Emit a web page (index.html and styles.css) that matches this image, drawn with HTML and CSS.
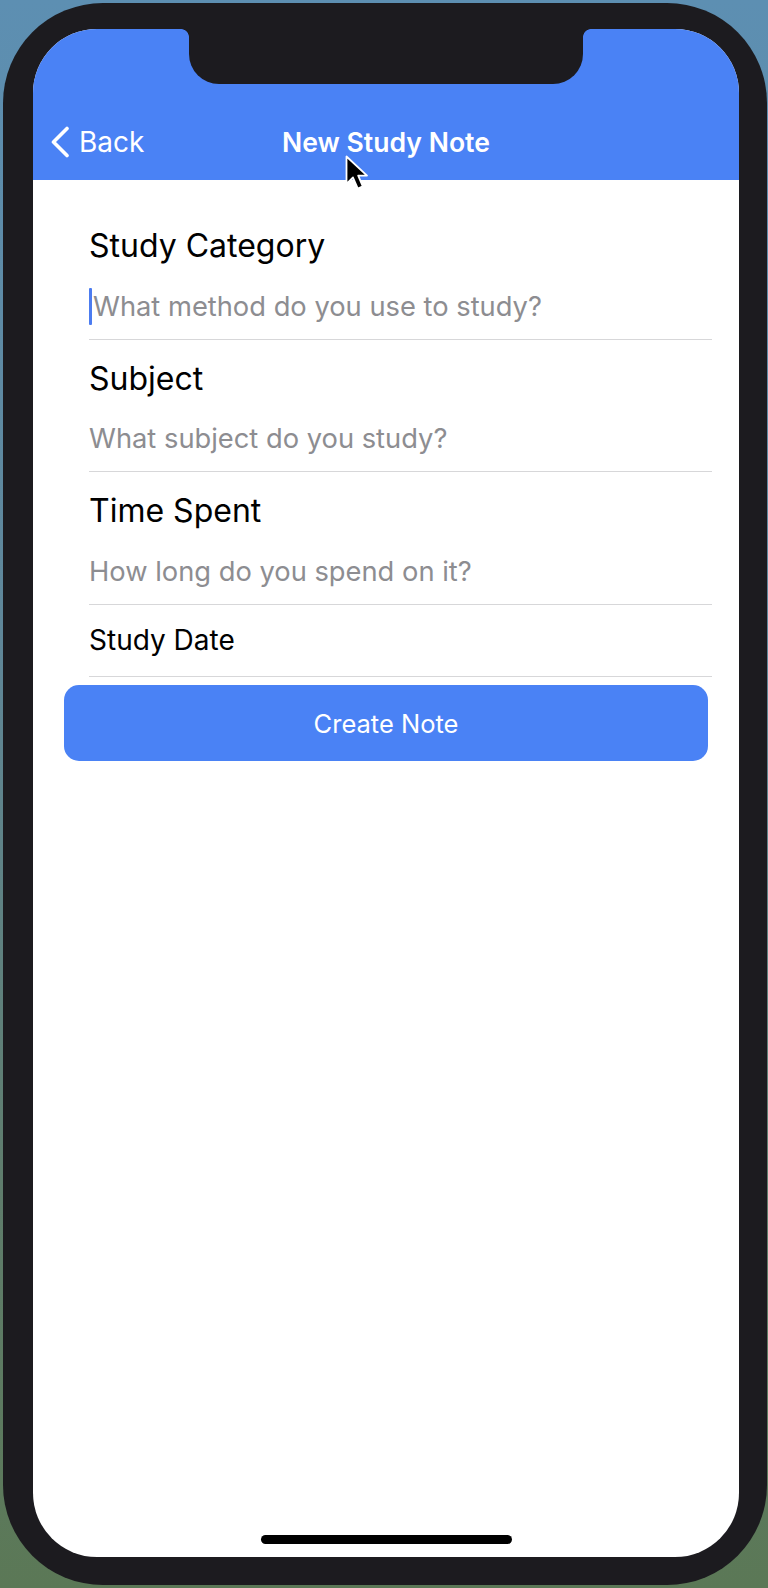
FILE: index.html
```html
<!DOCTYPE html>
<html lang="en">
<head>
<meta charset="utf-8">
<title>New Study Note</title>
<link rel="stylesheet" href="styles.css">
</head>
<body>
<div class="phone">
  <div class="screen">
    <div class="notch"></div>
    <header class="navbar">
      <div class="nav-inner">
        <a class="back">
          <svg class="chevron" width="20" height="32" viewBox="0 0 20 32"><polyline points="17,2.5 3.5,16 17,29.5" fill="none" stroke="#fff" stroke-width="3.6" stroke-linecap="round" stroke-linejoin="round"/></svg>
          <span>Back</span>
        </a>
        <h1 class="title">New Study Note</h1>
        <div class="nav-right"></div>
      </div>
    </header>
    <main class="form">
      <div class="fields">
        <div class="field">
          <div class="label">Study Category</div>
          <div class="input"><span class="caret"></span><span class="placeholder">What method do you use to study?</span></div>
        </div>
        <div class="field">
          <div class="label">Subject</div>
          <div class="input"><span class="placeholder">What subject do you study?</span></div>
        </div>
        <div class="field">
          <div class="label">Time Spent</div>
          <div class="input"><span class="placeholder">How long do you spend on it?</span></div>
        </div>
        <div class="date-field">Study Date</div>
      </div>
      <button class="create">Create Note</button>
    </main>
    <div class="home-indicator"></div>
  </div>
</div>
<svg class="pointer" width="26" height="38" viewBox="0 0 26 38"><path d="M1.5,1.5 L1.5,29 L8,22.5 L12.8,33.5 L17.8,31.4 L13.2,20.6 L22,20.6 Z" fill="#000" stroke="#fff" stroke-width="1.8" stroke-linejoin="round"/></svg>
</body>
</html>
```
FILE: styles.css
```css
html, body {
  margin: 0;
  padding: 0;
}
body {
  width: 768px;
  height: 1588px;
  position: relative;
  overflow: hidden;
  background: linear-gradient(180deg, #5d8fb2 0%, #5f8799 40%, #5f7d6c 75%, #5b7856 100%);
  font-family: "Inter", "Liberation Sans", sans-serif;
}
.phone {
  box-sizing: border-box;
  margin: 3px 1px 3px 3px;
  width: 764px;
  height: 1582px;
  border-radius: 100px;
  background: #1c1b1f;
  padding: 26px 28px 28px 30px;
}
.screen {
  position: relative;
  height: 100%;
  border-radius: 64px;
  overflow: hidden;
  background: #ffffff;
  display: flex;
  flex-direction: column;
}
.notch {
  position: absolute;
  left: 156px;
  top: 0;
  width: 394px;
  height: 55px;
  background: #1c1b1f;
  border-radius: 0 0 30px 30px;
  z-index: 2;
}
.notch::before,
.notch::after {
  content: "";
  position: absolute;
  top: 0;
  width: 8px;
  height: 8px;
}
.notch::before {
  left: -8px;
  background: radial-gradient(circle at 0 100%, transparent 7.5px, #1c1b1f 8.2px);
}
.notch::after {
  right: -8px;
  background: radial-gradient(circle at 100% 100%, transparent 7.5px, #1c1b1f 8.2px);
}
.navbar {
  box-sizing: border-box;
  height: 151px;
  padding-top: 90px;
  background: #4a82f5;
  flex: none;
}
.nav-inner {
  height: 46px;
  display: grid;
  grid-template-columns: 1fr auto 1fr;
  align-items: center;
}
.back {
  display: flex;
  align-items: center;
  gap: 9px;
  padding-left: 17px;
  color: #ffffff;
  font-size: 28px;
  line-height: 34px;
}
.chevron {
  display: block;
  flex: none;
}
.title {
  margin: 0;
  color: #ffffff;
  font-size: 26.6px;
  font-weight: 600;
  line-height: 34px;
}
.form {
  padding: 27px 31px 0;
  flex: none;
}
.fields {
  margin: 0 -4px 0 25px;
}
.field {
  padding: 22px 0 15px;
  border-bottom: 1px solid #d7d7d9;
}
.label {
  font-size: 32px;
  line-height: 34px;
  color: #000000;
}
.input {
  margin-top: 26.5px;
  height: 34px;
  display: flex;
  align-items: center;
  position: relative;
}
.caret {
  width: 3px;
  height: 37px;
  background: #4c7cf0;
  border-radius: 1px;
  margin-right: 1px;
  flex: none;
}
.placeholder {
  font-size: 27.3px;
  line-height: 34px;
  color: #8d8d91;
  white-space: nowrap;
}
.date-field {
  padding: 20.5px 0 21px;
  font-size: 28px;
  line-height: 30px;
  color: #000000;
  border-bottom: 1px solid #d7d7d9;
}
.create {
  display: block;
  width: 100%;
  margin-top: 8px;
  height: 76px;
  border: 0;
  border-radius: 15px;
  background: #4a82f5;
  color: #ffffff;
  font-family: inherit;
  font-size: 25.5px;
  padding: 0;
}
.home-indicator {
  margin: auto auto 13px;
  width: 251px;
  height: 9px;
  border-radius: 5px;
  background: #000000;
  flex: none;
}
.pointer {
  position: absolute;
  left: 345px;
  top: 155px;
}
```
